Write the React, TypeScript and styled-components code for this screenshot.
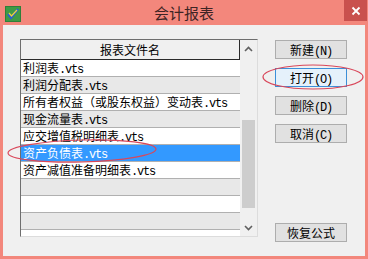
import React from 'react'
import styled, { createGlobalStyle } from 'styled-components'

const GlobalStyle = createGlobalStyle`
  html, body {
    margin: 0;
    padding: 0;
    background: #ffffff;
  }
  body {
    font-family: "Noto Sans CJK SC", "Liberation Sans", sans-serif;
  }
`;

const Window = styled.div`
  position: relative;
  width: 368px;
  height: 259px;
  box-sizing: border-box;
  background-color: #f3877c;
  padding: 0 3px 3px 3px;
  display: flex;
  flex-direction: column;
  overflow: hidden;
`;

const TitleBar = styled.div`
  position: relative;
  height: 25px;
  flex-shrink: 0;
  display: flex;
  flex-direction: row;
  align-items: center;
  justify-content: center;
`;

const AppIcon = styled.div`
  position: absolute;
  left: 2px;
  top: 3px;
  width: 16px;
  height: 16px;
`;

const Title = styled.div`
  font-size: 15px;
  color: #3d2424;
  line-height: 25px;
  margin-top: -1px;
`;

const CloseButton = styled.div`
  position: absolute;
  right: -2px;
  top: 0;
  width: 23px;
  height: 21px;
  background-color: #c9514e;
  display: flex;
  align-items: center;
  justify-content: center;
`;

const Client = styled.div`
  flex: 1;
  background-color: #f0f0f0;
  display: flex;
  flex-direction: row;
  align-items: flex-start;
  padding: 14px 0 0 17px;
`;

const ListBox = styled.div`
  width: 238px;
  height: 198px;
  box-sizing: border-box;
  border-top: 1px solid #6e6e6e;
  border-left: 1px solid #6e6e6e;
  border-right: 1px solid #dcdcdc;
  border-bottom: 1px solid #dcdcdc;
  display: flex;
  flex-direction: row;
  background-color: #ffffff;
`;

const Grid = styled.div`
  flex: 1;
  display: flex;
  flex-direction: column;
  overflow: hidden;
`;

const Header = styled.div`
  height: 19px;
  flex-shrink: 0;
  background-color: #f0f0f0;
  border-bottom: 1px solid #2a2a2a;
  border-right: 1px solid #2a2a2a;
  font-size: 12px;
  line-height: 19px;
  color: #000;
  text-align: center;
`;

const Row = styled.div<{
  shade: 'white' | 'gray' | 'selected',
}>`
  height: 16px;
  flex-shrink: 0;
  border-bottom: 1px solid #b0b0b0;
  padding-left: 2px;
  font-size: 12px;
  line-height: 16px;
  white-space: nowrap;
  color: ${props => props.shade == 'selected' ? '#ffffff' : '#000000'};
  background-color: ${props => {
      switch (props.shade) {
        case 'selected': return '#3399ff'
        case 'gray': return '#e8e8e8'
        default: return '#ffffff'
      }
    }
  };
`;

// half-width latin, as in the old bitmap ui font
const Latin = styled.span`
  font-family: "Liberation Mono", monospace;
  font-size: 12px;
  letter-spacing: -1.2px;
`;

const ScrollBar = styled.div`
  width: 17px;
  flex-shrink: 0;
  background-color: #f0f0f0;
  display: flex;
  flex-direction: column;
`;

const Arrow = styled.div`
  height: 17px;
  flex-shrink: 0;
  display: flex;
  align-items: center;
  justify-content: center;
`;

const Track = styled.div`
  flex: 1;
  display: flex;
  flex-direction: column;
`;

const Thumb = styled.div`
  margin: 63px 2px 0 2px;
  height: 88px;
  background-color: #cdcdcd;
`;

const ButtonColumn = styled.div`
  display: flex;
  flex-direction: column;
  gap: 9px;
  margin-left: 17px;
  padding-top: 1px;
  height: 203px;
  box-sizing: border-box;
`;

const Button = styled.div<{
  focused?: boolean,
}>`
  width: 72px;
  height: 19px;
  box-sizing: border-box;
  border: 1px solid ${props => props.focused ? '#3c8fd8' : '#adadad'};
  background-color: ${props => props.focused ? '#e5f1fb' : '#e1e1e1'};
  font-size: 12px;
  line-height: 17px;
  color: #000;
  text-align: center;
  white-space: nowrap;
`;

const Spacer = styled.div`
  flex: 1;
`;

const Marks = styled.svg`
  position: absolute;
  left: 0;
  top: 0;
  pointer-events: none;
`;

const files = [
  '利润表',
  '利润分配表',
  '所有者权益（或股东权益）变动表',
  '现金流量表',
  '应交增值税明细表',
  '资产负债表',
  '资产减值准备明细表',
]

const SELECTED = 5

export default function App() {
  const rows = []
  for (let i = 0; i < 11; i++) {
    const shade = i == SELECTED ? 'selected' : (i % 2 == 1 ? 'gray' : 'white')
    rows.push(
      <Row key={i} shade={shade}>
        {files[i] && <>{files[i]}<Latin>.vts</Latin></>}
      </Row>
    )
  }

  return (
    <Window>
      <GlobalStyle />
      <TitleBar>
        <AppIcon>
          <svg width="16" height="16" viewBox="0 0 16 16">
            <rect x="0" y="0" width="16" height="16" fill="#2f7f3a" />
            <rect x="1" y="1" width="14" height="14" fill="#3f9a45" />
            <path d="M3 8 L6 12 L13 3" stroke="#2a5fd0" strokeWidth="2.2" fill="none" />
            <path d="M4 7 L6.5 10 L12 4" stroke="#f2d23a" strokeWidth="1.2" fill="none" />
          </svg>
        </AppIcon>
        <Title>会计报表</Title>
        <CloseButton>
          <svg width="10" height="10" viewBox="0 0 10 10">
            <path d="M1.5 1.5 L8.5 8.5 M8.5 1.5 L1.5 8.5" stroke="#ffffff" strokeWidth="1.8" />
          </svg>
        </CloseButton>
      </TitleBar>
      <Client>
        <ListBox>
          <Grid>
            <Header>报表文件名</Header>
            {rows}
          </Grid>
          <ScrollBar>
            <Arrow>
              <svg width="9" height="6" viewBox="0 0 9 6">
                <path d="M1 5 L4.5 1.5 L8 5" stroke="#606060" strokeWidth="1.6" fill="none" />
              </svg>
            </Arrow>
            <Track>
              <Thumb />
            </Track>
            <Arrow>
              <svg width="9" height="6" viewBox="0 0 9 6">
                <path d="M1 1 L4.5 4.5 L8 1" stroke="#606060" strokeWidth="1.6" fill="none" />
              </svg>
            </Arrow>
          </ScrollBar>
        </ListBox>
        <ButtonColumn>
          <Button>新建<Latin>(N)</Latin></Button>
          <Button focused>打开<Latin>(O)</Latin></Button>
          <Button>删除<Latin>(D)</Latin></Button>
          <Button>取消<Latin>(C)</Latin></Button>
          <Spacer />
          <Button>恢复公式</Button>
        </ButtonColumn>
      </Client>
      <Marks width="368" height="259" viewBox="0 0 368 259">
        <ellipse cx="313" cy="77" rx="50" ry="12" fill="none" stroke="#d9475a" strokeWidth="1.2" />
        <ellipse cx="82" cy="151" rx="74" ry="11" fill="none" stroke="#d9475a" strokeWidth="1.2" transform="rotate(-1.5 82 151)" />
      </Marks>
    </Window>
  )
}
